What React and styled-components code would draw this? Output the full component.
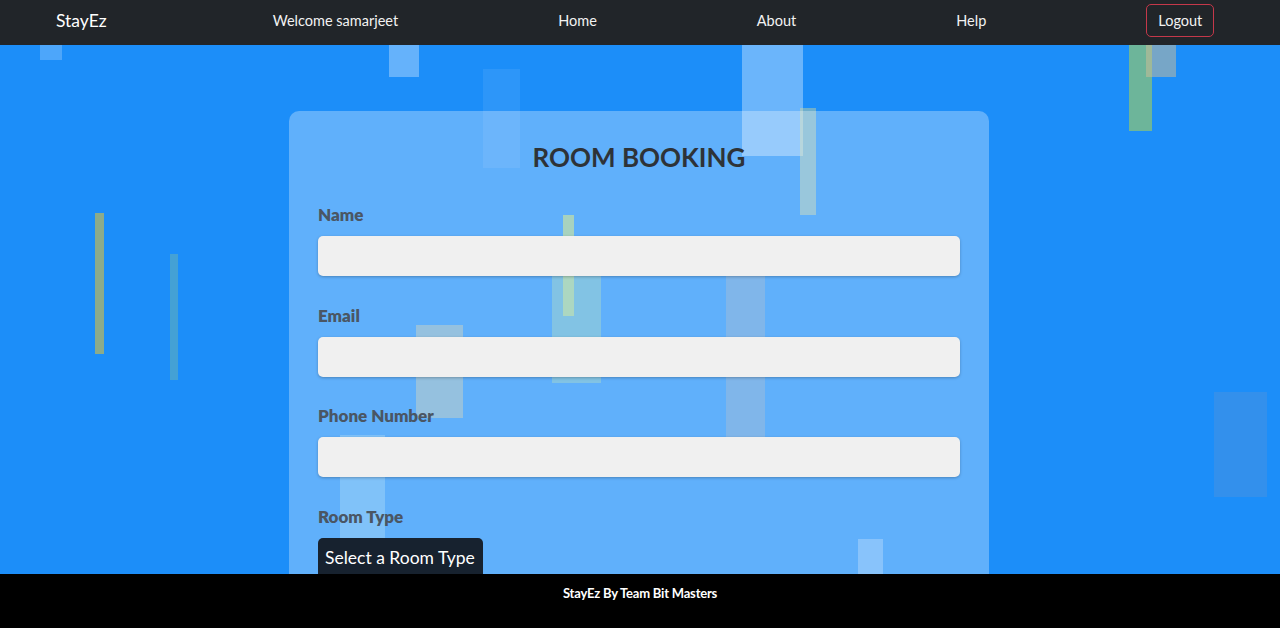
import React from 'react'
import styled, { createGlobalStyle } from 'styled-components'

const GlobalStyle = createGlobalStyle`
  html, body {
    margin: 0;
    padding: 0;
    height: 100%;
    overflow: hidden;
  }
  body {
    font-family: Lato, "Open Sans", sans-serif;
  }
  * {
    box-sizing: border-box;
  }
`

// floating background blocks (page x/y taken relative to the main area)
const blocks = [
  { x: 40, y: 0, w: 22, h: 15, c: 'rgba(255,255,255,0.22)' },
  { x: 389, y: 0, w: 30, h: 32, c: 'rgba(255,255,255,0.32)' },
  { x: 483, y: 24, w: 37, h: 99, c: 'rgba(255,255,255,0.08)' },
  { x: 742, y: 0, w: 61, h: 111, c: 'rgba(255,255,255,0.35)' },
  { x: 800, y: 63, w: 16, h: 107, c: 'rgba(210,215,150,0.45)' },
  { x: 1129, y: 0, w: 23, h: 86, c: 'rgba(190,220,60,0.5)' },
  { x: 1146, y: 0, w: 30, h: 32, c: 'rgba(210,190,150,0.5)' },
  { x: 95, y: 168, w: 9, h: 141, c: 'rgba(250,200,30,0.5)' },
  { x: 170, y: 209, w: 8, h: 126, c: 'rgba(130,190,160,0.4)' },
  { x: 563, y: 170, w: 11, h: 101, c: 'rgba(230,240,80,0.5)' },
  { x: 552, y: 231, w: 49, h: 107, c: 'rgba(150,210,170,0.4)' },
  { x: 416, y: 280, w: 47, h: 93, c: 'rgba(180,190,170,0.5)' },
  { x: 726, y: 231, w: 39, h: 161, c: 'rgba(160,170,180,0.35)' },
  { x: 340, y: 390, w: 45, h: 150, c: 'rgba(180,230,240,0.3)' },
  { x: 1214, y: 347, w: 53, h: 105, c: 'rgba(120,150,200,0.25)' },
  { x: 858, y: 494, w: 25, h: 40, c: 'rgba(255,255,255,0.25)' },
]

function App() {
  return (
    <>
      <GlobalStyle />
      <Page>
        <Navbar>
          <Brand>StayEz</Brand>
          <NavList>
            <NavItem>Welcome samarjeet</NavItem>
            <NavItem>Home</NavItem>
            <NavItem>About</NavItem>
            <NavItem>Help</NavItem>
            <LogoutButton>Logout</LogoutButton>
          </NavList>
        </Navbar>

        <Main>
          {blocks.map((b, i) => (
            <Block key={i} $x={b.x} $y={b.y} $w={b.w} $h={b.h} $c={b.c} />
          ))}
          <Card>
            <Title>ROOM BOOKING</Title>
            <Field>
              <Label>Name</Label>
              <Input type="text" />
            </Field>
            <Field>
              <Label>Email</Label>
              <Input type="email" />
            </Field>
            <Field>
              <Label>Phone Number</Label>
              <Input type="tel" />
            </Field>
            <Field>
              <Label>Room Type</Label>
              <Select defaultValue="">
                <option value="">Select a Room Type</option>
                <option value="single">Single</option>
                <option value="double">Double</option>
                <option value="suite">Suite</option>
              </Select>
            </Field>
          </Card>
        </Main>

        <Footer>StayEz By Team Bit Masters</Footer>
      </Page>
    </>
  )
}

export default App

const Page = styled.div`
  height: 100vh;
  display: flex;
  flex-direction: column;
`

const Navbar = styled.nav`
  height: 45px;
  flex-shrink: 0;
  background-color: #212529;
  display: flex;
  align-items: center;
  padding: 0 0 4px 56px;
`

const Brand = styled.span`
  font-family: Lato, sans-serif;
  font-size: 17.5px;
  color: #ffffff;
  margin-right: 166px;
`

const NavList = styled.div`
  display: flex;
  align-items: center;
  gap: 160px;
`

const NavItem = styled.span`
  font-size: 14.5px;
  color: #f2f2f2;
`

const LogoutButton = styled.button`
  font-family: Lato, sans-serif;
  font-size: 14.5px;
  color: #f2f2f2;
  background: transparent;
  border: 1px solid #c4384a;
  border-radius: 5px;
  height: 33px;
  padding: 0 11px;
`

const Main = styled.main`
  flex: 1;
  position: relative;
  overflow: hidden;
  padding-right: 2px;
  background-color: #1c8ef9;
`

const Block = styled.div.attrs(p => ({
  style: {
    left: p.$x,
    top: p.$y,
    width: p.$w,
    height: p.$h,
    background: p.$c,
  },
}))`
  position: absolute;
`

const Card = styled.div`
  position: relative;
  width: 700px;
  margin: 66px auto 0;
  padding: 29px 29px 40px;
  border-radius: 10px;
  background: rgba(255, 255, 255, 0.3);
`

const Title = styled.h2`
  margin: 0 0 30px;
  text-align: center;
  font-family: Lato, sans-serif;
  font-weight: 700;
  font-size: 26px;
  line-height: 34px;
  color: #2e3338;
`

const Field = styled.div`
  margin-bottom: 28.5px;
`

const Label = styled.label`
  display: block;
  font-family: Lato, sans-serif;
  font-weight: 800;
  font-size: 17px;
  line-height: 22px;
  color: #4a5664;
  margin-bottom: 10px;
`

const Input = styled.input`
  display: block;
  width: 100%;
  height: 40px;
  border: none;
  border-radius: 5px;
  background: #f0f0f0;
  box-shadow: 0 1px 3px rgba(0, 0, 0, 0.25);
  outline: none;
  padding: 0 12px;
  font-size: 16px;
`

const Select = styled.select`
  appearance: none;
  height: 44px;
  padding: 0 7px 4px;
  border: none;
  border-radius: 5px;
  background: #17222f;
  color: #ffffff;
  font-family: Lato, sans-serif;
  font-size: 17.5px;
`

const Footer = styled.footer`
  height: 54px;
  flex-shrink: 0;
  background: #000000;
  color: #ffffff;
  display: flex;
  justify-content: center;
  padding-top: 11px;
  font-family: Lato, sans-serif;
  font-size: 13px;
  font-weight: 700;
  letter-spacing: -0.2px;
`
